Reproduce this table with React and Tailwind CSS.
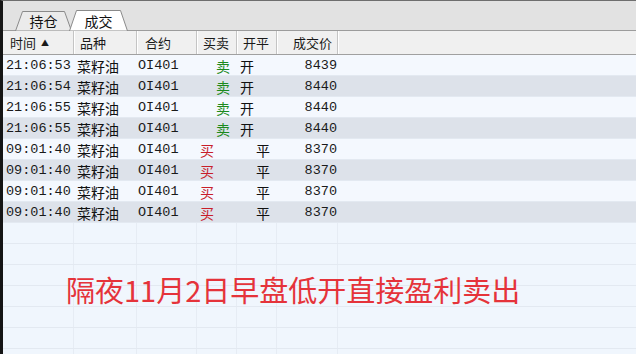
import React from "react";

const cols = [71, 63, 60, 40, 40, 61];

const trades = [
  { time: "21:06:53", name: "菜籽油", code: "OI401", side: "卖", oc: "开", price: "8439" },
  { time: "21:06:54", name: "菜籽油", code: "OI401", side: "卖", oc: "开", price: "8440" },
  { time: "21:06:55", name: "菜籽油", code: "OI401", side: "卖", oc: "开", price: "8440" },
  { time: "21:06:55", name: "菜籽油", code: "OI401", side: "卖", oc: "开", price: "8440" },
  { time: "09:01:40", name: "菜籽油", code: "OI401", side: "买", oc: "平", price: "8370" },
  { time: "09:01:40", name: "菜籽油", code: "OI401", side: "买", oc: "平", price: "8370" },
  { time: "09:01:40", name: "菜籽油", code: "OI401", side: "买", oc: "平", price: "8370" },
  { time: "09:01:40", name: "菜籽油", code: "OI401", side: "买", oc: "平", price: "8370" },
];

const cjk = { fontFamily: '"Noto Sans CJK SC", sans-serif' };
const mono = { fontFamily: '"Liberation Mono", "Noto Sans CJK SC", monospace' };

function Tab({ label, active, w, h, className }) {
  return (
    <div className={`relative flex items-center justify-center ${className}`} style={{ width: w, height: h }}>
      <svg className="absolute inset-0" width={w} height={h} viewBox={`0 0 ${w} ${h}`}>
        <polygon
          points={`0.5,${h} 7.5,0.5 ${w - 7.5},0.5 ${w - 0.5},${h}`}
          fill={active ? "#ffffff" : "#ebebeb"}
          stroke="#8a8a8a"
          strokeWidth="1"
        />
      </svg>
      <span className="relative text-[14px] text-[#111] pt-[1px]" style={cjk}>
        {label}
      </span>
    </div>
  );
}

function HeadCell({ w, children, className = "" }) {
  return (
    <div
      className={`h-full flex items-center border-r border-[#c4c4c4] shadow-[1px_0_0_#ffffff] text-[13px] text-[#1a1a1a] ${className}`}
      style={{ width: w, ...cjk }}
    >
      {children}
    </div>
  );
}

function Row({ t, shaded }) {
  const buy = t.side === "买";
  return (
    <div className={`flex h-[21px] border-b border-[#e3e9f1] ${shaded ? "bg-[#dde2ea]" : "bg-[#f4f8fe]"}`}>
      <div className="flex items-center pl-[3px] pt-[3px] text-[13.5px] text-[#1a1a1a]" style={{ width: cols[0], ...mono }}>
        {t.time}
      </div>
      <div className="flex items-center pl-[3px] pt-[3px] text-[14px] text-[#111]" style={{ width: cols[1], ...cjk }}>
        {t.name}
      </div>
      <div className="flex items-center pl-[1px] pt-[3px] text-[13.5px] text-[#1a1a1a]" style={{ width: cols[2], ...mono }}>
        {t.code}
      </div>
      <div
        className={`flex items-center pt-[3px] text-[14px] ${buy ? "pl-[3px] text-[#c81e2a]" : "pl-[19px] text-[#1c8a1c]"}`}
        style={{ width: cols[3], ...cjk }}
      >
        {t.side}
      </div>
      <div
        className={`flex items-center pt-[3px] text-[14px] text-[#111] ${buy ? "pl-[19px]" : "pl-[3px]"}`}
        style={{ width: cols[4], ...cjk }}
      >
        {t.oc}
      </div>
      <div className="flex items-center justify-end pr-[1px] pt-[3px] text-[13.5px] text-[#1a1a1a]" style={{ width: cols[5], ...mono }}>
        {t.price}
      </div>
      <div className="flex-1" />
    </div>
  );
}

function EmptyRow() {
  return (
    <div className="flex h-[21px] border-b border-[#e3e9f1]">
      {cols.map((w, i) => (
        <div key={i} className="h-full border-r border-[#e6ecf4]" style={{ width: w }} />
      ))}
      <div className="flex-1" />
    </div>
  );
}

export default function App() {
  return (
    <div className="relative w-[636px] h-[354px] overflow-hidden bg-[#f0f6fd] border-t border-t-[#6e6e6e] border-l-[3px] border-l-[#151515] flex flex-col">
      <div className="h-[30px] bg-[#e2e2e2] flex items-end border-b border-[#9c9c9c] shrink-0">
        <Tab label="持仓" w={57} h={20} className="ml-[12px] mb-[-1px]" />
        <Tab label="成交" active w={59} h={21} className="ml-[-3px] mb-[-1px]" />
      </div>

      <div className="h-[24px] bg-[#f0f0f0] flex border-b border-[#a0a0a0] shrink-0">
        <HeadCell w={cols[0]} className="pl-[7px] gap-[5px]">
          <span>时间</span>
          <span className="text-[8px]">▲</span>
        </HeadCell>
        <HeadCell w={cols[1]} className="pl-[6px]">品种</HeadCell>
        <HeadCell w={cols[2]} className="pl-[8px]">合约</HeadCell>
        <HeadCell w={cols[3]} className="pl-[6px]">买卖</HeadCell>
        <HeadCell w={cols[4]} className="pl-[6px]">开平</HeadCell>
        <HeadCell w={cols[5]} className="justify-end pr-[5px]">成交价</HeadCell>
        <div className="flex-1" />
      </div>

      <div className="flex flex-col">
        {trades.map((t, i) => (
          <Row key={i} t={t} shaded={i % 2 === 1} />
        ))}
        {Array.from({ length: 7 }).map((_, i) => (
          <EmptyRow key={i} />
        ))}
      </div>

      <div
        className="absolute left-[63px] top-[274px] text-[29px] leading-none text-[#e5333a] whitespace-nowrap"
        style={cjk}
      >
        隔夜11月2日早盘低开直接盈利卖出
      </div>
    </div>
  );
}
